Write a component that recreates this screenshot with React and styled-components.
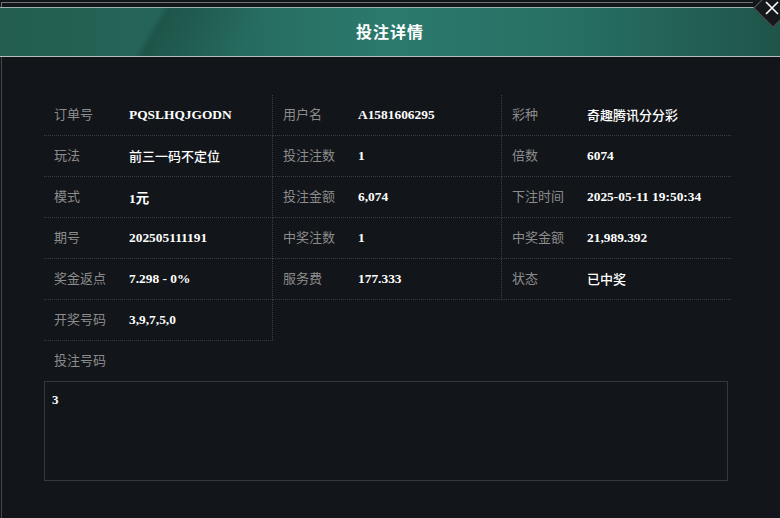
import React from 'react';
import styled, { createGlobalStyle } from 'styled-components';

const GlobalStyle = createGlobalStyle`
  html, body {
    margin: 0;
    padding: 0;
    background: #121519;
  }
  * {
    box-sizing: border-box;
  }
`;

const Page = styled.div`
  position: relative;
  width: 780px;
  height: 518px;
  overflow: hidden;
  background: #121519;
  font-family: "Noto Sans CJK SC", "Noto Sans", sans-serif;
`;

const TopStrip = styled.div`
  height: 5px;
  margin-top: 2px;
  margin-left: 1px;
  width: 752px;
  border-top: 1px solid #6f7275;
  border-left: 1px solid #6f7275;
`;

const Header = styled.div`
  height: 50px;
  display: flex;
  align-items: center;
  justify-content: center;
  padding-bottom: 2px;
  border-top: 1px solid #9fb3ae;
  border-bottom: 1px solid #b9bdbc;
  background:
    linear-gradient(120deg, rgba(0, 0, 0, 0) 0 20%, rgba(10, 40, 32, 0.25) 21%, rgba(0, 0, 0, 0) 33%),
    linear-gradient(90deg, #235e50 0%, #25665a 25%, #2b7a6d 50%, #276e62 75%, #1f5449 100%);
`;

const Title = styled.h1`
  margin: 0;
  font-size: 16px;
  font-weight: 700;
  color: #ffffff;
  letter-spacing: 1px;
`;

const CloseButton = styled.button`
  position: absolute;
  top: -6px;
  left: 759px;
  width: 28px;
  height: 28px;
  padding: 0;
  border: 1px solid #55595c;
  background: #16191c;
  transform: rotate(45deg);
  cursor: pointer;
  display: flex;
  align-items: center;
  justify-content: center;
`;

const CloseIcon = styled.svg`
  transform: rotate(-45deg) translate(-1px, 0);
`;

const Body = styled.div`
  margin-left: 1px;
  border-left: 1px solid #45484b;
  height: 461px;
  padding: 38px 0 0 42px;
`;

const InfoGrid = styled.div`
  display: grid;
  grid-template-columns: repeat(3, 229px);
  width: 687px;
`;

const Cell = styled.div`
  display: flex;
  align-items: center;
  height: 41px;
  padding-left: 10px;
  border-bottom: 1px dotted #3b3e42;
  border-right: ${(p) => (p.$edge ? 'none' : '1px dotted #3b3e42')};
`;

const Label = styled.span`
  width: 75px;
  flex-shrink: 0;
  margin-bottom: 3px;
  font-size: 13px;
  color: #8c8c8c;
`;

const Value = styled.span`
  font-family: "Liberation Serif", "Noto Sans CJK SC", serif;
  font-size: ${(p) => (p.$cjk ? '13px' : '13.4px')};
  font-weight: ${(p) => (p.$cjk ? 500 : 700)};
  margin-bottom: ${(p) => (p.$cjk ? '2px' : '0')};
  color: #ffffff;
  white-space: nowrap;
`;

const SectionLabel = styled.div`
  padding: 9px 0 0 10px;
  height: 40px;
  font-size: 13px;
  color: #8c8c8c;
`;

const NumberBox = styled.div`
  width: 684px;
  height: 100px;
  border: 1px solid #35383b;
  padding: 10px 7px;
  font-family: "Liberation Serif", serif;
  font-size: 13px;
  font-weight: 700;
  color: #ffffff;
`;

const rows = [
  [['订单号', 'PQSLHQJGODN'], ['用户名', 'A1581606295'], ['彩种', '奇趣腾讯分分彩', true]],
  [['玩法', '前三一码不定位', true], ['投注注数', '1'], ['倍数', '6074']],
  [['模式', '1元'], ['投注金额', '6,074'], ['下注时间', '2025-05-11 19:50:34']],
  [['期号', '202505111191'], ['中奖注数', '1'], ['中奖金额', '21,989.392']],
  [['奖金返点', '7.298 - 0%'], ['服务费', '177.333'], ['状态', '已中奖', true]],
  [['开奖号码', '3,9,7,5,0']],
];

export default function App() {
  return (
    <Page>
      <GlobalStyle />
      <TopStrip />
      <Header>
        <Title>投注详情</Title>
      </Header>
      <CloseButton aria-label="关闭">
        <CloseIcon width="14" height="14" viewBox="0 0 14 14">
          <path d="M1 1 L13 13 M13 1 L1 13" stroke="#ffffff" strokeWidth="1.6" fill="none" />
        </CloseIcon>
      </CloseButton>
      <Body>
        <InfoGrid>
          {rows.map((row) =>
            row.map(([label, value, cjk], i) => (
              <Cell key={label} $edge={i === 2}>
                <Label>{label}</Label>
                <Value $cjk={cjk}>{value}</Value>
              </Cell>
            ))
          )}
        </InfoGrid>
        <SectionLabel>投注号码</SectionLabel>
        <NumberBox>3</NumberBox>
      </Body>
    </Page>
  );
}
